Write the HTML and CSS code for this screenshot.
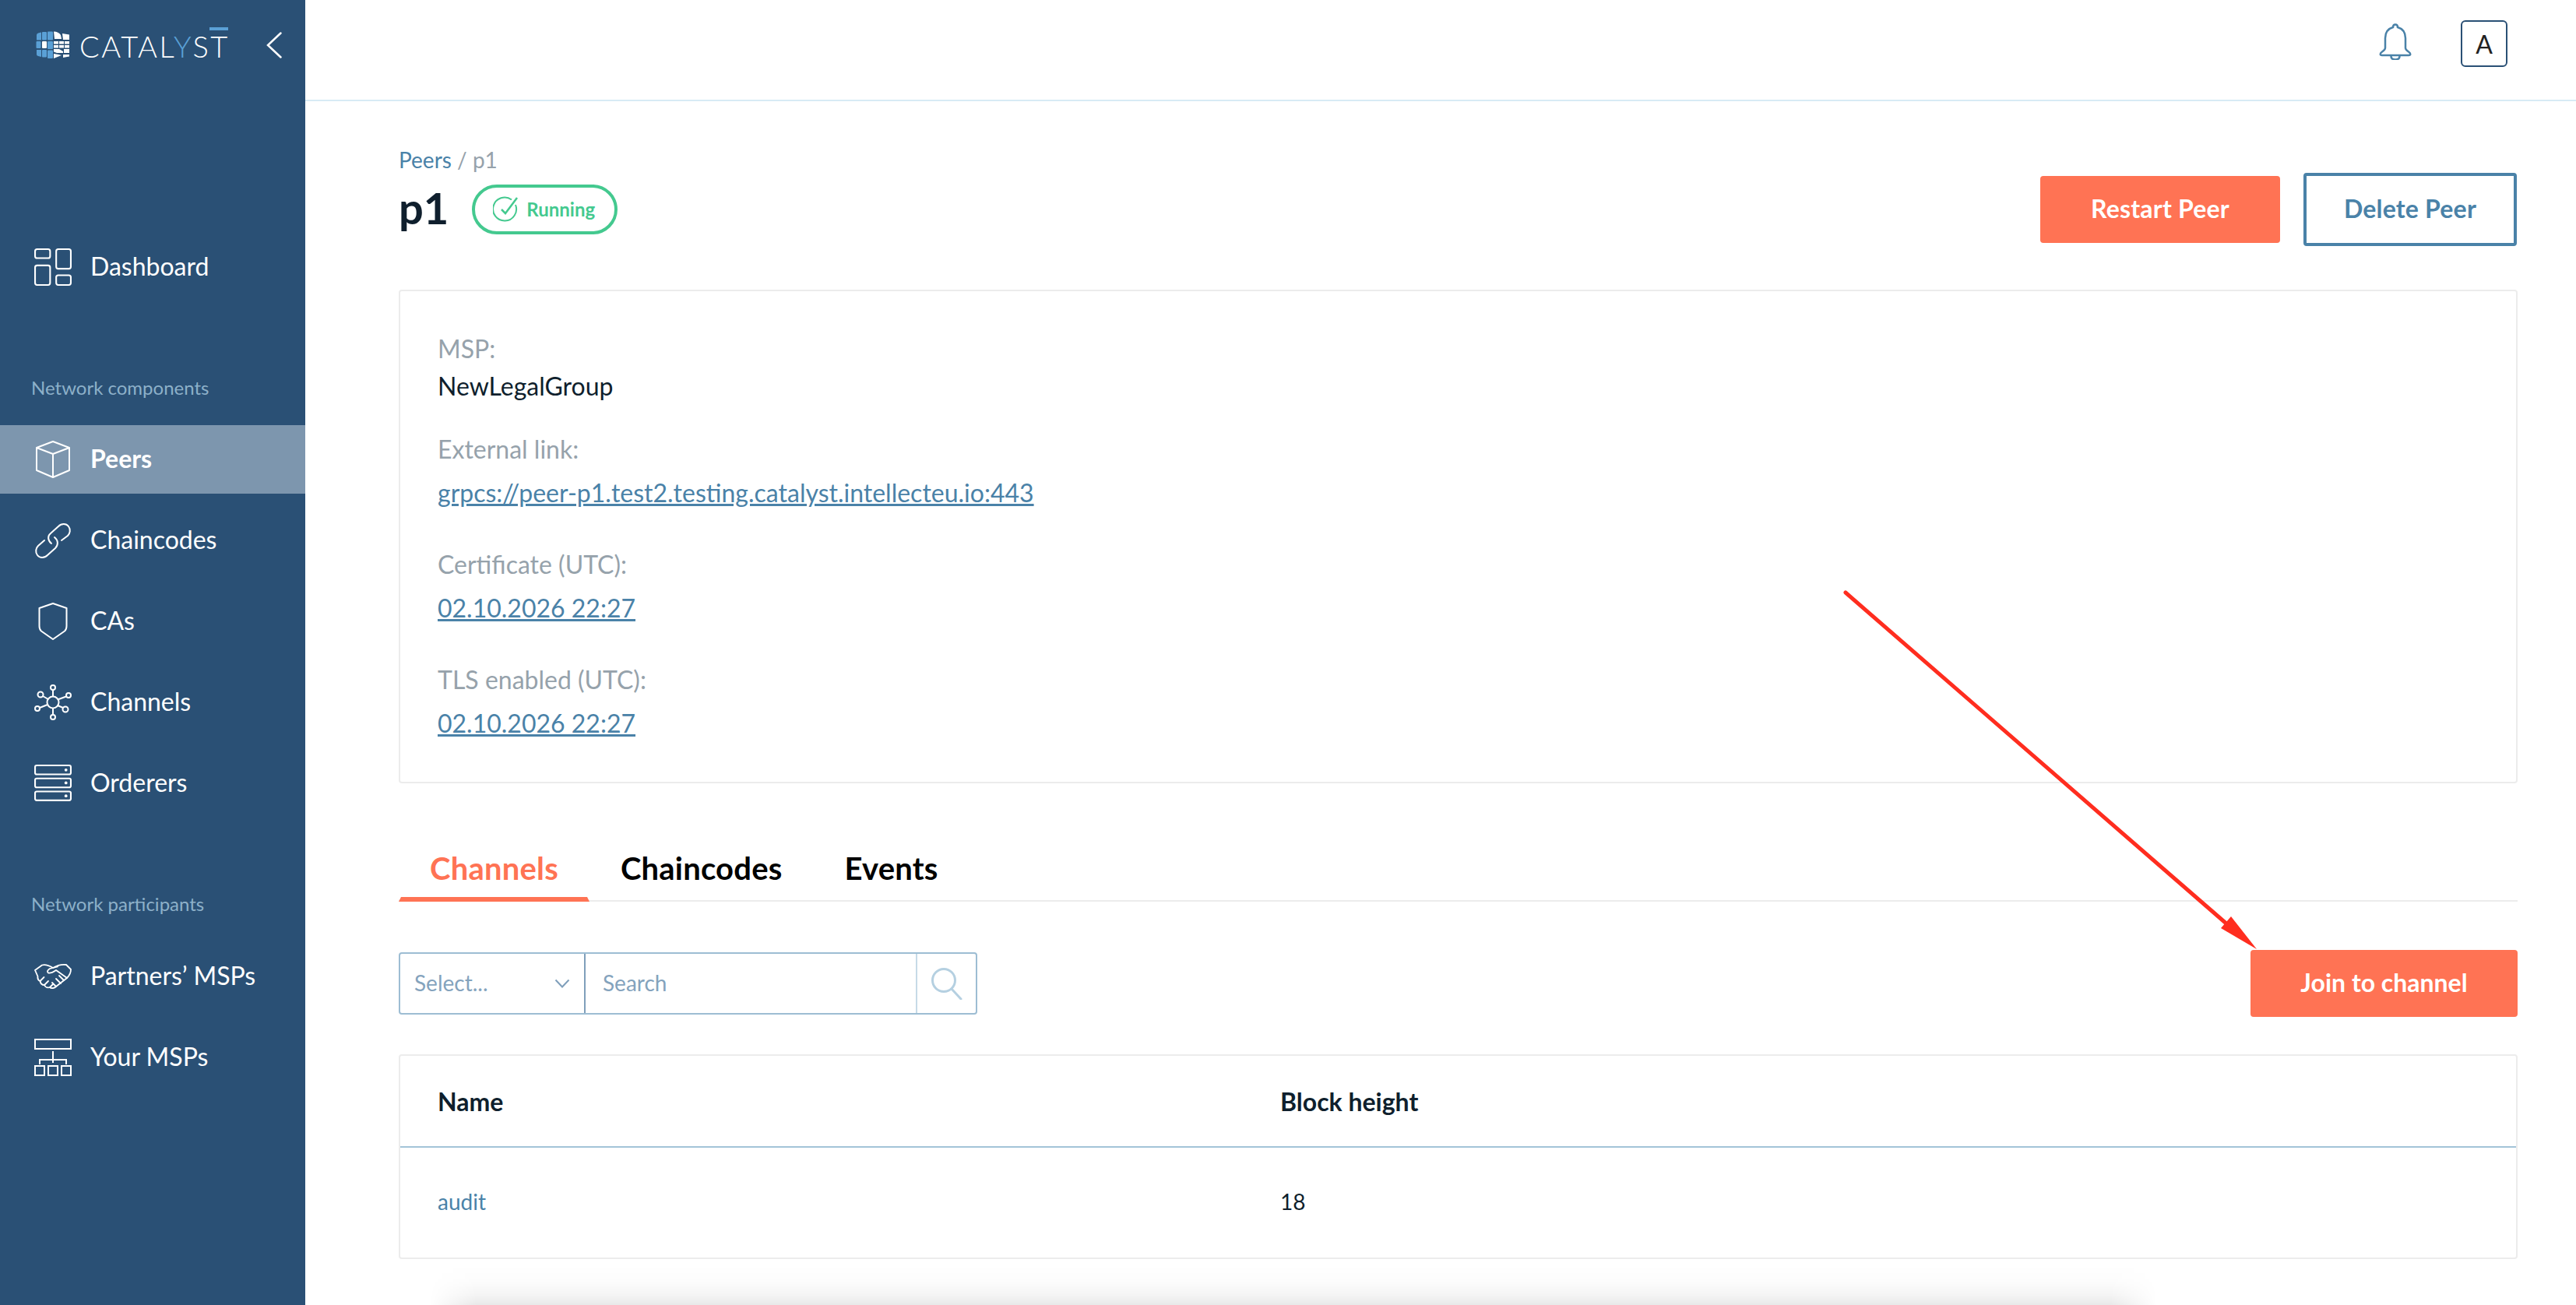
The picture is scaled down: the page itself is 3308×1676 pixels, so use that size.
FILE: index.html
```html
<!DOCTYPE html>
<html lang="en">
<head>
<meta charset="utf-8">
<title>Catalyst - Peer p1</title>
<link rel="stylesheet" href="styles.css">
</head>
<body>
<div class="app">
  <aside class="sidebar">
    <div class="brand">
      <svg class="brand-mark" viewBox="0 0 44 36" width="44" height="36">
        <g fill="#5aa0d6">
          <path d="M3 2.500l4-1v10H1V5q0-2 2-2.500z"/><rect x="8" y="1" width="6" height="10.500" rx="1"/><rect x="15" y="0.500" width="7" height="11" rx="1"/>
          <rect x="0.500" y="13" width="6" height="9" rx="1"/><rect x="15" y="13" width="7" height="10" rx="1"/>
          <path d="M1 24h6v9l-4-1q-2-.5-2-2z"/><rect x="8" y="24" width="6" height="9.500" rx="1"/><rect x="15" y="24.500" width="7" height="10.500" rx="1"/>
        </g>
        <rect x="8" y="13" width="6" height="9" fill="#fff" rx="1"/>
        <g fill="#fff">
          <path d="M23 .5q6 0 9 4.500l1 5H24z"/><path d="M34 3l9 1.500V11h-8z"/>
          <rect x="23" y="13" width="6" height="3.500"/><rect x="30" y="13" width="6" height="3.500"/><rect x="37" y="13" width="6" height="3.500"/>
          <rect x="23" y="18" width="6" height="3.500"/><rect x="30" y="18" width="6" height="3.500"/><rect x="37" y="18" width="6" height="3.500"/>
          <path d="M23 23h7l5 3v2h-8l-4-1.500z"/><rect x="36" y="23" width="7" height="5"/>
          <path d="M23 29l6 1 4 1-10 4z"/><path d="M35 30h8v2.500l-8 1.500z"/>
        </g>
      </svg>
      <span class="brand-name">CATAL<span class="brand-y">Y</span>S<span class="brand-t">T</span></span>
      <svg class="collapse" viewBox="0 0 20 34" width="20" height="34"><path d="M18.500 1.500L2 17l16.500 15.500" fill="none" stroke="#fff" stroke-width="2.500" stroke-linecap="round"/></svg>
    </div>

    <nav class="nav">
      <a class="nav-item nav-dash">
        <svg class="nav-icon" viewBox="0 0 46 46"><g fill="none" stroke="#fff" stroke-width="2"><rect x="1" y="1" width="18.500" height="11" rx="2.500"/><rect x="27" y="1" width="18" height="24" rx="2.500"/><rect x="1" y="21" width="18.500" height="24" rx="2.500"/><rect x="27" y="33" width="18" height="12" rx="2.500"/></g></svg>
        <span>Dashboard</span>
      </a>

      <p class="nav-label nav-label-first">Network components</p>
      <div class="nav-group">
        <a class="nav-item active">
          <svg class="nav-icon" viewBox="0 0 46 48"><path d="M23 1l21 8v29l-21 9-21-9V9zM2 9l21 8 21-8M23 17v30" fill="none" stroke="#fff" stroke-width="2" stroke-linejoin="round"/></svg>
          <span>Peers</span>
        </a>
        <a class="nav-item">
          <svg class="nav-icon" viewBox="0 0 48 48"><g fill="none" stroke="#fff" stroke-width="2" stroke-linecap="round"><path d="M22 28C17 24 17 18 21 15L31 6C35 2 41 2 44 6C47 10 46 15 43 18L35 24"/><path d="M26 20C31 24 31 30 27 34L17 43C13 47 7 47 4 43C1 39 2 34 5 31L13 24"/></g></svg>
          <span>Chaincodes</span>
        </a>
        <a class="nav-item">
          <svg class="nav-icon" viewBox="0 0 46 48"><path d="M23 1l17.500 6v23c0 3-.5 5-2.500 6.500L23 47 8 36.500C6 35 5.500 33 5.500 30V7z" fill="none" stroke="#fff" stroke-width="2" stroke-linejoin="round"/></svg>
          <span>CAs</span>
        </a>
        <a class="nav-item">
          <svg class="nav-icon" viewBox="0 0 48 46"><g fill="none" stroke="#fff" stroke-width="2"><circle cx="24" cy="23" r="7.500"/><circle cx="24" cy="4" r="3"/><circle cx="24" cy="42" r="3"/><circle cx="8" cy="13" r="3.500"/><circle cx="44" cy="14" r="3"/><circle cx="4" cy="31" r="3"/><circle cx="40" cy="32" r="3.500"/><path d="M24 7v8.500M24 30.500V39M11 15l7 4M41 15.500l-11 4M7 30l10-4M37 30l-7-3"/></g></svg>
          <span>Channels</span>
        </a>
        <a class="nav-item">
          <svg class="nav-icon" viewBox="0 0 46 46"><g fill="none" stroke="#fff" stroke-width="2"><rect x="1" y="1" width="44" height="11" rx="2"/><rect x="1" y="17" width="44" height="11" rx="2"/><rect x="1" y="33" width="44" height="11" rx="2"/></g><g fill="#fff"><circle cx="39" cy="6.500" r="1.800"/><circle cx="39" cy="22.500" r="1.800"/><circle cx="39" cy="38.500" r="1.800"/></g></svg>
          <span>Orderers</span>
        </a>
      </div>

      <p class="nav-label nav-label-second">Network participants</p>
      <div class="nav-group">
        <a class="nav-item">
          <svg class="nav-icon" viewBox="0 0 48 32"><g fill="none" stroke="#fff" stroke-width="1.800" stroke-linejoin="round" stroke-linecap="round"><path d="M1 8L10 1.500C14 .5 19 2 24 5C29 2 34 0 41 1L47 7C47 11 45 15 42 18L28 29C26 31 22 32 20 30C17 31 14 30 13 27C10 27 8 25 7.500 22C5 21 4 19 4.500 16Z"/><path d="M30 3.500L20 6C17 8 16 10 18 11.500C21 12.500 25 10 28 8L42 18"/><path d="M13 27l5-5M20 30l4-4M7.500 22l5-5M28 29l-5-5M34 25l-6-6M38 21l-6-6"/></g></svg>
          <span>Partners’ MSPs</span>
        </a>
        <a class="nav-item">
          <svg class="nav-icon" viewBox="0 0 48 48"><g fill="none" stroke="#fff" stroke-width="2"><rect x="1" y="1" width="46" height="12"/><rect x="1" y="35" width="12" height="12"/><rect x="18" y="35" width="12" height="12"/><rect x="35" y="35" width="12" height="12"/><path d="M24 16v15M7 33v-6h34v6"/></g></svg>
          <span class="your-msps">Your MSPs</span>
        </a>
      </div>
    </nav>
  </aside>

  <div class="main">
    <header class="topbar">
      <svg class="bell" viewBox="0 0 44 47" width="44" height="47"><path d="M22 1.500c-2 0-3 1.500-3 3.500-7 2-10 7-10 14v12.500c0 2-1 3-4 5-3 2-3 4.500 0 4.500h34c3 0 3-2.500 0-4.500-3-2-4-3-4-5V19c0-7-3-12-10-14 0-2-1-3.500-3-3.500zM16.500 42c0 3 2.500 4.500 5.500 4.500s5.500-1.500 5.500-4.500" fill="none" stroke="#4a82a8" stroke-width="2.500"/></svg>
      <div class="avatar">A</div>
    </header>

    <main class="content">
      <div class="page-head">
        <div>
          <div class="crumbs"><a class="crumb-link">Peers</a> <span class="crumb-sep">/</span> <span class="crumb-cur">p1</span></div>
          <div class="title-row">
            <h1 class="title">p1</h1>
            <div class="badge">
              <svg viewBox="0 0 34 34" width="34" height="34"><path d="M29 11a15 15 0 1 1-5-6.500" fill="none" stroke="#44c98f" stroke-width="2"/><path d="M11 17l5 5L31 2" fill="none" stroke="#44c98f" stroke-width="2.500"/></svg>
              <span>Running</span>
            </div>
          </div>
        </div>
        <div class="actions">
          <button class="btn btn-primary btn-restart">Restart Peer</button>
          <button class="btn btn-outline">Delete Peer</button>
        </div>
      </div>

      <section class="card">
        <div class="field field-msp">
          <div class="label">MSP:</div>
          <div class="value">NewLegalGroup</div>
        </div>
        <div class="field">
          <div class="label">External link:</div>
          <a class="link">grpcs://peer-p1.test2.testing.catalyst.intellecteu.io:443</a>
        </div>
        <div class="field">
          <div class="label">Certificate (UTC):</div>
          <a class="link">02.10.2026 22:27</a>
        </div>
        <div class="field field-last">
          <div class="label">TLS enabled (UTC):</div>
          <a class="link">02.10.2026 22:27</a>
        </div>
      </section>

      <div class="tabs">
        <a class="tab tab-active">Channels</a>
        <a class="tab">Chaincodes</a>
        <a class="tab">Events</a>
      </div>

      <div class="toolbar">
        <div class="filter">
          <div class="filter-select">
            <span>Select...</span>
            <svg viewBox="0 0 20 12" width="20" height="12"><path d="M1.500 1.500l8.500 9 8.500-9" fill="none" stroke="#7f9fbb" stroke-width="2"/></svg>
          </div>
          <div class="filter-input">Search</div>
          <div class="filter-search">
            <svg viewBox="0 0 42 42" width="42" height="42"><circle cx="17" cy="17" r="14.500" fill="none" stroke="#b5d0e1" stroke-width="3"/><path d="M27 28l12 13" fill="none" stroke="#b5d0e1" stroke-width="3" stroke-linecap="round"/></svg>
          </div>
        </div>
        <button class="btn btn-primary btn-join">Join to channel</button>
      </div>

      <table class="table">
        <thead>
          <tr><th class="col-name">Name</th><th>Block height</th></tr>
        </thead>
        <tbody>
          <tr><td><a class="cell-link">audit</a></td><td>18</td></tr>
        </tbody>
      </table>
    </main>
  </div>
</div>

<div class="bottom-shadow"></div>

<svg class="annotation" viewBox="0 0 3308 1676" width="3308" height="1676">
  <path d="M2370 761L2860 1187" stroke="#ff2d1f" stroke-width="5" stroke-linecap="round" fill="none"/>
  <path d="M2898 1219L2865 1177 2852 1192z" fill="#ff2d1f"/>
</svg>
</body>
</html>
```
FILE: styles.css
```css
* { box-sizing: border-box; }
html, body { margin: 0; padding: 0; }
body {
  width: 3308px;
  height: 1676px;
  overflow: hidden;
  position: relative;
  background: #fff;
  font-family: Lato, "Open Sans", sans-serif;
  color: #0f1f2d;
}
.app { display: flex; height: 1676px; overflow: hidden; }

/* sidebar */
.sidebar {
  flex: 0 0 392px;
  background: #2a5075;
  color: #fff;
  display: flex;
  flex-direction: column;
}
.brand {
  height: 128px;
  display: flex;
  align-items: flex-start;
  padding: 40px 0 0 46px;
}
.brand-mark { flex: none; }
.brand-name {
  position: relative;
  margin-left: 12px;
  width: 240px;
  font-weight: 300;
  font-size: 38px;
  line-height: 38px;
  letter-spacing: 2.6px;
  white-space: nowrap;
}
.brand-y { color: #5aa0d6; }
.brand-t { position: relative; }
.brand-t::before {
  content: "";
  position: absolute;
  left: -1px;
  right: 2px;
  top: -1px;
  height: 4px;
  background: #5aa0d6;
}
.collapse { margin-left: 0; margin-top: 1px; flex: none; }

.nav { display: flex; flex-direction: column; padding-top: 171px; }
.nav-group { display: flex; flex-direction: column; gap: 16px; }
.nav-item {
  height: 88px;
  display: flex;
  align-items: center;
  padding-left: 44px;
  font-size: 32px;
  color: #fff;
}
.nav-item span { padding-bottom: 4px; }
.nav-icon { width: 48px; height: 48px; flex: none; margin-right: 24px; }
.nav-item.active { background: #7d96ae; font-weight: 700; }
.nav-label {
  margin: 0;
  padding-left: 40px;
  font-size: 24px;
  line-height: 30px;
  color: #8db0c9;
}
.nav-label-first { margin-top: 96px; margin-bottom: 33px; }
.nav-label-second { margin-top: 96px; margin-bottom: 34px; }

/* topbar */
.main { flex: 1; min-width: 0; display: flex; flex-direction: column; }
.topbar {
  flex: 0 0 130px;
  border-bottom: 2px solid #d8ebf5;
  display: flex;
  justify-content: flex-end;
  padding: 26px 88px 0 0;
}
.bell { margin: 4px 62px 0 0; flex: none; }
.avatar {
  width: 60px;
  height: 60px;
  border: 2px solid #2a5075;
  border-radius: 6px;
  font-size: 32px;
  font-weight: 400;
  display: flex;
  align-items: center;
  justify-content: center;
  color: #222;
}

/* content */
.content { padding: 58px 75px 0 120px; flex: 1; }
.page-head { display: flex; justify-content: space-between; align-items: flex-start; }
.crumbs { font-size: 28px; line-height: 34px; color: #96a2ab; }
.crumb-link { color: #4a82a8; }
.title-row { display: flex; align-items: center; margin-top: 15px; height: 64px; }
.title { margin: 0 30px 0 0; font-size: 56px; font-weight: 700; line-height: 60px; height: 64px; color: #0f1f2d; }
.badge {
  width: 187px;
  height: 64px;
  border: 4px solid #44c98f;
  border-radius: 32px;
  display: flex;
  align-items: center;
  padding-left: 23px;
  gap: 9px;
  color: #44c98f;
  font-size: 24px;
  font-weight: 700;
}
.badge span { padding-bottom: 2px; }
.actions { display: flex; align-items: center; gap: 30px; margin: 34px 1px 0 0; }
.btn {
  font-family: inherit;
  font-size: 32px;
  font-weight: 700;
  letter-spacing: .2px;
  border-radius: 4px;
  cursor: pointer;
  padding: 0 0 4px;
}
.btn-primary { background: #ff7354; color: #fff; border: 0; height: 86px; }
.btn-restart { width: 308px; }
.btn-join { width: 343px; letter-spacing: 0; }
.btn-outline { width: 274px; height: 94px; background: #fff; color: #4a82a8; border: 4px solid #4a82a8; }

.card {
  margin-top: 56px;
  height: 634px;
  border: 2px solid #ececec;
  border-radius: 4px;
  padding: 54px 48px 0;
}
.field { margin-bottom: 52px; }
.field-msp { margin-bottom: 41px; }
.field-last { margin-bottom: 0; }
.label { font-size: 32px; line-height: 40px; color: #96a2ab; }
.value { font-size: 32px; line-height: 40px; margin-top: 8px; color: #0f1f2d; }
.link { display: block; width: fit-content; font-size: 32px; line-height: 40px; margin-top: 16px; color: #4a82a8; text-decoration: underline; }

.tabs { margin-top: 75px; display: flex; height: 77px; border-bottom: 2px solid #ececec; }
.tab {
  height: 77px;
  padding: 0 37px;
  border-bottom: 6px solid transparent;
  border-left: 3px solid transparent;
  border-right: 3px solid transparent;
  font-size: 40px;
  font-weight: 700;
  line-height: 68px;
  letter-spacing: .2px;
  color: #000;
}
.tab-active { color: #ff7354; border-bottom-color: #ff7354; }

.toolbar { margin-top: 62px; display: flex; justify-content: space-between; align-items: center; }
.filter {
  display: flex;
  width: 743px;
  height: 80px;
  border: 2px solid #9dbdd3;
  border-radius: 4px;
  font-size: 28px;
  color: #84a3bd;
}
.filter-select {
  flex: 0 0 238px;
  border-right: 2px solid #7f9fbb;
  display: flex;
  align-items: center;
  justify-content: space-between;
  padding: 0 18px 0 18px;
}
.filter-select span { padding-bottom: 2px; }
.filter-input { flex: 1; display: flex; align-items: center; padding: 0 0 2px 22px; }
.filter-search {
  flex: 0 0 77px;
  border-left: 2px solid #c6dae7;
  display: flex;
  align-items: center;
  justify-content: center;
}

.table {
  margin-top: 48px;
  width: 100%;
  table-layout: fixed;
  border-collapse: separate;
  border-spacing: 0;
  border: 2px solid #ececec;
  border-radius: 4px;
}
.table th {
  height: 118px;
  text-align: left;
  padding: 0 0 0 48px;
  font-size: 32px;
  font-weight: 700;
  border-bottom: 2px solid #a3c4d8;
  color: #0f1f2d;
}
.table .col-name { width: 1082px; }
.table td { height: 141px; padding: 0 0 4px 48px; font-size: 28px; color: #0f1f2d; }
.cell-link { color: #4a82a8; }

.bottom-shadow {
  position: absolute;
  left: 552px;
  width: 2218px;
  top: 1625px;
  height: 51px;
  background: linear-gradient(to bottom, rgba(0, 0, 0, 0), rgba(0, 0, 0, .012) 40%, rgba(0, 0, 0, .045) 75%, rgba(0, 0, 0, .085));
  -webkit-mask-image: linear-gradient(to right, transparent, #000 60px, #000 calc(100% - 60px), transparent);
  mask-image: linear-gradient(to right, transparent, #000 60px, #000 calc(100% - 60px), transparent);
}
.annotation { position: absolute; left: 0; top: 0; pointer-events: none; }
```
